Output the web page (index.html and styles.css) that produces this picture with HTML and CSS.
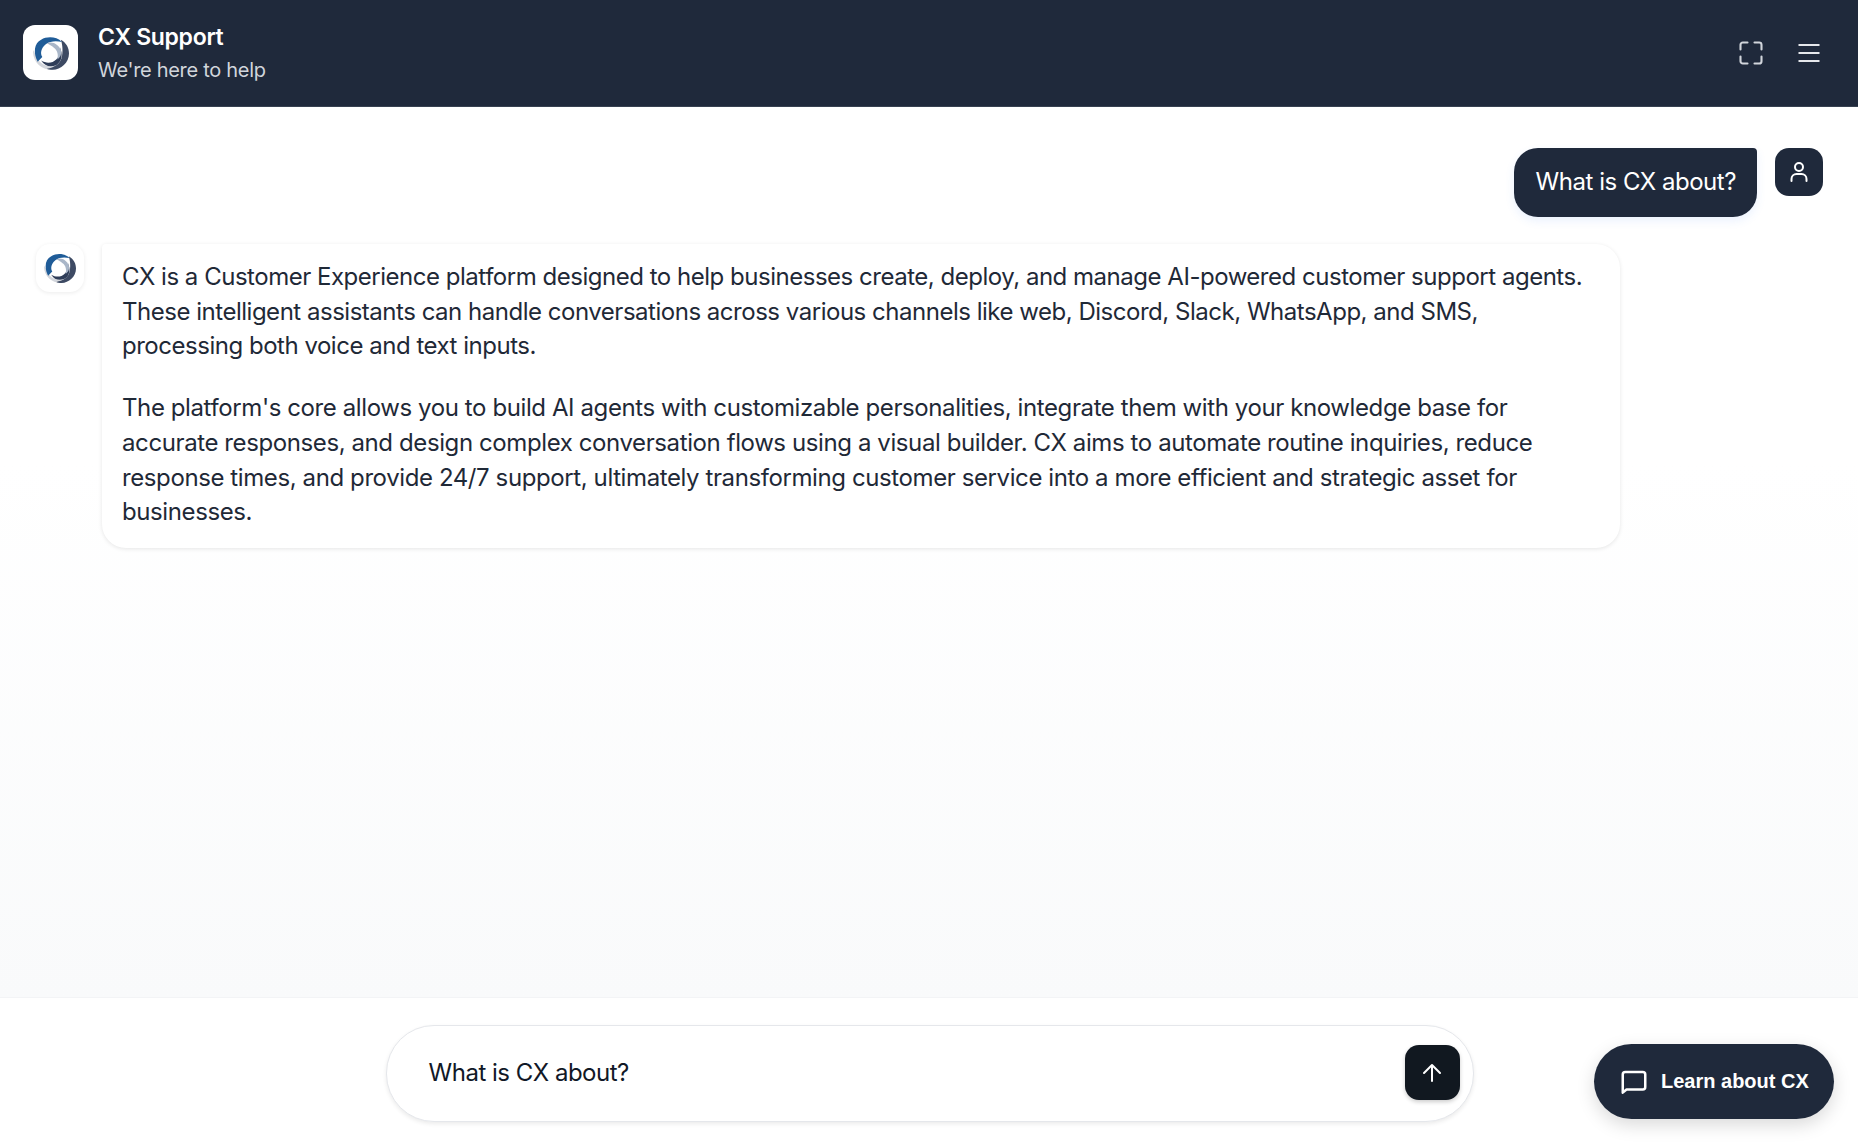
FILE: index.html
```html
<!DOCTYPE html>
<html lang="en">
<head>
    <meta charset="UTF-8">
    <meta name="viewport" content="width=device-width, initial-scale=1.0">
    <title>CX Support</title>
    <link rel="stylesheet" href="styles.css">
</head>
<body>
    <svg class="defs" width="0" height="0" aria-hidden="true">
        <symbol id="cx-logo" viewBox="0 0 31 29">
            <path d="M0 12C-.5 22 7 29 16 29c3 0 5-1 6-2-2-1-3-1-5-1-6 0-11-2-13-7z" fill="#d3d6dc"/>
            <path d="M24 3c5 3 7 7 7 12 0 8-7 14-14 14-2 0-4-.5-5-1 6-1 12-4 13-11 1-6 0-11-1-14z" fill="#3d4a63"/>
            <path d="M7 21c5 3 10 2 13-1 4-3 4-8 3-11 3 7 2 13-3 16-5 2-10 1-13-4z" fill="#2f3d58"/>
            <path d="M4 22C0 14 1 6 7 3c5-3 13-3 18 2-5-1-10-1-14 2-4 3-5 8-3 11z" fill="#1f5c98"/>
            <path d="M12 6c5-2 10 1 12 6 1 4-1 7-3 8 1-4 0-8-3-10-2-2-4-3-6-4z" fill="#a9b6c8"/>
        </symbol>
    </svg>

    <header class="topbar">
        <div class="brand">
            <div class="brand-logo"><svg width="36" height="34"><use href="#cx-logo"/></svg></div>
            <div class="brand-text">
                <div class="brand-title">CX Support</div>
                <div class="brand-sub">We're here to help</div>
            </div>
        </div>
        <div class="topbar-actions">
            <svg width="28" height="28" viewBox="0 0 24 24" fill="none" stroke="#d1d5db" stroke-width="1.800" stroke-linecap="round" stroke-linejoin="round">
                <path d="M3 9V5a2 2 0 0 1 2-2h4M15 3h4a2 2 0 0 1 2 2v4M21 15v4a2 2 0 0 1-2 2h-4M9 21H5a2 2 0 0 1-2-2v-4"/>
            </svg>
            <svg width="24" height="24" viewBox="0 0 24 24" fill="none" stroke="#e5e7eb" stroke-width="2">
                <path d="M1.500 4h21M1.500 12h21M1.500 20h21"/>
            </svg>
        </div>
    </header>

    <main class="chat">
        <div class="msg-user">
            <div class="bubble-user">What is CX about?</div>
            <div class="avatar-user">
                <svg width="24" height="24" viewBox="0 0 24 24" fill="none" stroke="#fff" stroke-width="2" stroke-linecap="round">
                    <circle cx="12" cy="7" r="4"/>
                    <path d="M4.500 21v-2a5 5 0 0 1 5-5h5a5 5 0 0 1 5 5v2"/>
                </svg>
            </div>
        </div>
        <div class="msg-bot">
            <div class="avatar-bot"><svg width="32" height="30"><use href="#cx-logo"/></svg></div>
            <div class="bubble-bot">
                <p>CX is a Customer Experience platform designed to help businesses create, deploy, and manage AI-powered customer support agents. These intelligent assistants can handle conversations across various channels like web, Discord, Slack, WhatsApp, and SMS, processing both voice and text inputs.</p>
                <p>The platform's core allows you to build AI agents with customizable personalities, integrate them with your knowledge base for accurate responses, and design complex conversation flows using a visual builder. CX aims to automate routine inquiries, reduce response times, and provide 24/7 support, ultimately transforming customer service into a more efficient and strategic asset for businesses.</p>
            </div>
        </div>
    </main>

    <footer class="composer">
        <div class="input-box">
            <span class="input-text">What is CX about?</span>
            <button class="send-btn">
                <svg width="24" height="24" viewBox="0 0 24 24" fill="none" stroke="#fff" stroke-width="2" stroke-linecap="round" stroke-linejoin="round">
                    <path d="M12 20V4M4 12l8-8 8 8"/>
                </svg>
            </button>
        </div>
    </footer>

    <button class="learn-btn">
        <svg width="30" height="30" viewBox="0 0 24 24" fill="none" stroke="#fff" stroke-width="2" stroke-linejoin="round">
            <path d="M3 20.500V6a2 2 0 0 1 2-2h14a2 2 0 0 1 2 2v10a2 2 0 0 1-2 2H6z"/>
        </svg>
        Learn about CX
    </button>
</body>
</html>
```

FILE: styles.css
```css
* {
    box-sizing: border-box;
}
body {
    position: relative;
    margin: 0;
    height: 1142px;
    display: flex;
    flex-direction: column;
    font-family: Inter, "Liberation Sans", sans-serif;
    letter-spacing: -0.48px;
    color: #1f2937;
    background: #fff;
}
.defs {
    position: absolute;
}
.topbar {
    height: 107px;
    flex-shrink: 0;
    display: flex;
    align-items: center;
    justify-content: space-between;
    padding: 0 37px 1px 23px;
    background: #1f293b;
    border-bottom: 1px solid #374151;
    box-shadow: 0 2px 6px rgba(0, 0, 0, 0.08);
}
.brand {
    display: flex;
    align-items: center;
    gap: 20px;
}
.brand-logo {
    width: 55px;
    height: 55px;
    border-radius: 12px;
    background: #fff;
    display: flex;
    align-items: center;
    justify-content: center;
}
.brand-text {
    margin-top: 2px;
}
.brand-title {
    font-size: 23px;
    font-weight: 600;
    letter-spacing: -0.3px;
    line-height: 33px;
    color: #fff;
}
.brand-sub {
    font-size: 20px;
    letter-spacing: -0.3px;
    line-height: 33px;
    color: #d1d5db;
}
.topbar-actions {
    display: flex;
    align-items: center;
    gap: 32px;
}
.chat {
    flex: 1;
    padding: 41px 35px 0 36px;
    background: linear-gradient(180deg, #fff 40%, #f9fafb 100%);
}
.msg-user {
    display: flex;
    justify-content: flex-end;
    align-items: flex-start;
    gap: 18px;
    margin-bottom: 27px;
}
.bubble-user {
    padding: 0 21px 2px 22px;
    height: 69px;
    display: flex;
    align-items: center;
    font-size: 24px;
    color: #fff;
    background: #1f293b;
    border-radius: 24px 4px 24px 24px;
    box-shadow: 0 4px 10px rgba(59, 130, 246, 0.1);
}
.avatar-user {
    width: 48px;
    height: 48px;
    border-radius: 14px;
    background: #1f293b;
    display: flex;
    align-items: center;
    justify-content: center;
}
.msg-bot {
    display: flex;
    align-items: flex-start;
    gap: 18px;
}
.avatar-bot {
    width: 48px;
    height: 48px;
    border-radius: 14px;
    background: #fff;
    box-shadow: 0 1px 4px rgba(0, 0, 0, 0.08);
    display: flex;
    align-items: center;
    justify-content: center;
}
.bubble-bot {
    width: 1518px;
    padding: 16px 30px 18px 20px;
    font-size: 24px;
    line-height: 34.700px;
    color: #1f2937;
    background: #fff;
    border-radius: 4px 24px 24px 24px;
    box-shadow: 0 1px 4px rgba(0, 0, 0, 0.1);
}
.bubble-bot p {
    margin: 0 0 27px;
}
.bubble-bot p + p {
    letter-spacing: -0.4px;
}
.bubble-bot p:last-child {
    margin-bottom: 0;
}
.composer {
    height: 145px;
    flex-shrink: 0;
    padding: 27px 0 0 1px;
    background: #fff;
    border-top: 1px solid #f3f4f6;
    display: flex;
    justify-content: center;
}
.input-box {
    width: 1088px;
    height: 97px;
    padding: 0 13px 2px 42px;
    display: flex;
    align-items: center;
    justify-content: space-between;
    background: #fff;
    border: 1px solid #e5e7eb;
    border-radius: 48px;
    box-shadow: 0 2px 4px rgba(0, 0, 0, 0.08);
}
.input-text {
    font-size: 24px;
    color: #111827;
}
.send-btn {
    width: 55px;
    height: 55px;
    padding: 0;
    border: none;
    border-radius: 14px;
    background: #111820;
    display: flex;
    align-items: center;
    justify-content: center;
    box-shadow: 0 2px 4px rgba(0, 0, 0, 0.2);
}
.learn-btn {
    position: absolute;
    right: 24px;
    bottom: 23px;
    width: 240px;
    height: 75px;
    padding: 0 0 0 25px;
    border: none;
    border-radius: 38px;
    display: flex;
    align-items: center;
    gap: 12px;
    font-family: "Liberation Sans", Arial, sans-serif;
    font-size: 20px;
    font-weight: 700;
    letter-spacing: 0;
    color: #fff;
    background: #1f293b;
    box-shadow: 0 6px 18px rgba(0, 0, 0, 0.15);
}
```
